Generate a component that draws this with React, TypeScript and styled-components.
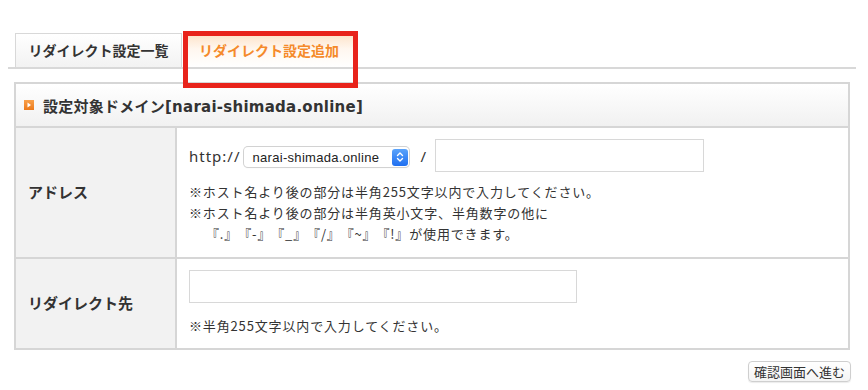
import styled, { createGlobalStyle } from "styled-components";

const GlobalStyle = createGlobalStyle`
  html, body {
    margin: 0;
    padding: 0;
    background: #fff;
  }
  body {
    font-family: "Noto Sans", "Noto Sans CJK JP", sans-serif;
    color: #333;
    text-spacing-trim: space-all;
  }
`;

const Page = styled.div`
  position: relative;
  width: 868px;
  height: 390px;
  padding: 33px 12px 0 8px;
  box-sizing: border-box;
`;

const TabBar = styled.div`
  display: flex;
  align-items: flex-end;
  gap: 2px;
  height: 36px;
  box-sizing: border-box;
  padding-left: 7px;
  border-bottom: 2px solid #d8d8d8;
`;

const Tab = styled.div<{ $active?: boolean }>`
  display: flex;
  align-items: center;
  justify-content: center;
  width: ${({ $active }) => ($active ? "170px" : "167px")};
  height: 34px;
  box-sizing: border-box;
  border: 1px solid #d8d8d8;
  border-bottom: none;
  background: ${({ $active }) =>
    $active
      ? "linear-gradient(to bottom, #fde2c8 0%, #fff7ef 45%, #ffffff 100%)"
      : "linear-gradient(to bottom, #ffffff 0%, #f2f2f2 100%)"};
  color: ${({ $active }) => ($active ? "#f58a2a" : "#333")};
  font-family: "Noto Sans CJK JP", sans-serif;
  font-weight: 700;
  font-size: 14px;
  padding-bottom: 1px;
`;

const Highlight = styled.div`
  position: absolute;
  left: 183px;
  top: 31px;
  width: 175px;
  height: 57px;
  box-sizing: border-box;
  border: 5px solid #e8231b;
  pointer-events: none;
`;

const Panel = styled.div`
  margin: 13px 6px 0 6px;
  border: 2px solid #d6d6d6;
`;

const PanelHeader = styled.div`
  display: flex;
  align-items: center;
  gap: 9px;
  height: 42px;
  padding-left: 8px;
  background: linear-gradient(to bottom, #ffffff 0%, #f1f1f1 100%);
  border-bottom: 2px solid #d6d6d6;
  font-family: "DejaVu Sans", "Noto Sans CJK JP", sans-serif;
  font-weight: 700;
  font-size: 15px;
  letter-spacing: 0.25px;
  color: #333;
`;

const Bullet = styled.span`
  display: inline-flex;
  align-items: center;
  justify-content: center;
  width: 10px;
  height: 10px;
  background: linear-gradient(to bottom, #f9a04a, #ec7a1c);
`;

const Row = styled.div<{ $last?: boolean }>`
  display: grid;
  grid-template-columns: 161px 1fr;
  border-bottom: ${({ $last }) => ($last ? "none" : "2px solid #d6d6d6")};
`;

const Label = styled.div<{ $h: number }>`
  display: flex;
  align-items: center;
  height: ${({ $h }) => $h}px;
  padding-left: 12px;
  padding-bottom: 3px;
  box-sizing: border-box;
  background: #f2f2f2;
  border-right: 2px solid #d6d6d6;
  font-family: "Noto Sans CJK JP", sans-serif;
  font-weight: 700;
  font-size: 15px;
  color: #333;
`;

const Cell = styled.div`
  display: flex;
  flex-direction: column;
  padding: 11px 12px 0 12px;
`;

const UrlLine = styled.div`
  display: flex;
  align-items: center;
  height: 33px;
  font-size: 15px;
  letter-spacing: 1px;
  color: #333;
`;

const Select = styled.div`
  display: flex;
  align-items: center;
  justify-content: space-between;
  width: 165px;
  height: 20px;
  box-sizing: border-box;
  margin-left: 3px;
  margin-top: 3px;
  padding: 0 1px 0 9px;
  border-radius: 4px;
  background: #fff;
  box-shadow: 0 0 0 1px #d2d2d2, 0 1px 1px rgba(0, 0, 0, 0.12);
  font-family: "Liberation Sans", "Noto Sans", sans-serif;
  font-size: 13px;
  letter-spacing: 0.3px;
  color: #222;
`;

const Stepper = styled.span`
  display: inline-flex;
  align-items: center;
  justify-content: center;
  width: 16px;
  height: 17px;
  border-radius: 3px;
  background: linear-gradient(to bottom, #5aa3fb, #1f6ff0);
`;

const Slash = styled.span`
  margin: 0 8px 0 12px;
  font-size: 15px;
`;

const TextBox = styled.div<{ $w: number }>`
  width: ${({ $w }) => $w}px;
  height: 33px;
  box-sizing: border-box;
  border: 1px solid #d8d8d8;
  background: #fff;
`;

const Notes = styled.div<{ $top: number }>`
  margin-top: ${({ $top }) => $top}px;
  font-family: "Noto Sans CJK JP", sans-serif;
  font-size: 13px;
  letter-spacing: 0.85px;
  line-height: 21px;
  color: #333;
`;

const Indent = styled.div`
  padding-left: 17px;
`;

const Footer = styled.div`
  display: flex;
  justify-content: flex-end;
  margin: 11px 5px 0 0;
`;

const Button = styled.button`
  display: block;
  height: 21px;
  padding: 0 5px;
  border: 1px solid #cfcfcf;
  border-radius: 4px;
  background: linear-gradient(to bottom, #ffffff, #f4f4f4);
  box-shadow: 0 1px 1px rgba(0, 0, 0, 0.08);
  font-family: "Noto Sans CJK JP", sans-serif;
  font-size: 13px;
  color: #333;
  line-height: 19px;
`;

export default function App() {
  return (
    <>
      <GlobalStyle />
      <Page>
        <TabBar>
          <Tab>リダイレクト設定一覧</Tab>
          <Tab $active>リダイレクト設定追加</Tab>
        </TabBar>
        <Highlight />

        <Panel>
          <PanelHeader>
            <Bullet>
              <svg width="6" height="6" viewBox="0 0 6 6">
                <path d="M1.5 0.5 L5 3 L1.5 5.5 Z" fill="#fff" />
              </svg>
            </Bullet>
            設定対象ドメイン[narai-shimada.online]
          </PanelHeader>

          <Row>
            <Label $h={129}>アドレス</Label>
            <Cell>
              <UrlLine>
                http://
                <Select>
                  narai-shimada.online
                  <Stepper>
                    <svg width="8" height="12" viewBox="0 0 8 12">
                      <path
                        d="M1.5 4.5 L4 2 L6.5 4.5 M1.5 7.5 L4 10 L6.5 7.5"
                        fill="none"
                        stroke="#fff"
                        strokeWidth="1.4"
                        strokeLinecap="round"
                        strokeLinejoin="round"
                      />
                    </svg>
                  </Stepper>
                </Select>
                <Slash>/</Slash>
                <TextBox $w={269} />
              </UrlLine>
              <Notes $top={9}>
                <div>※ホスト名より後の部分は半角255文字以内で入力してください。</div>
                <div>※ホスト名より後の部分は半角英小文字、半角数字の他に</div>
                <Indent>『.』『-』『_』『/』『~』『!』が使用できます。</Indent>
              </Notes>
            </Cell>
          </Row>

          <Row $last>
            <Label $h={89}>リダイレクト先</Label>
            <Cell>
              <TextBox $w={388} />
              <Notes $top={12}>※半角255文字以内で入力してください。</Notes>
            </Cell>
          </Row>
        </Panel>

        <Footer>
          <Button>確認画面へ進む</Button>
        </Footer>
      </Page>
    </>
  );
}
